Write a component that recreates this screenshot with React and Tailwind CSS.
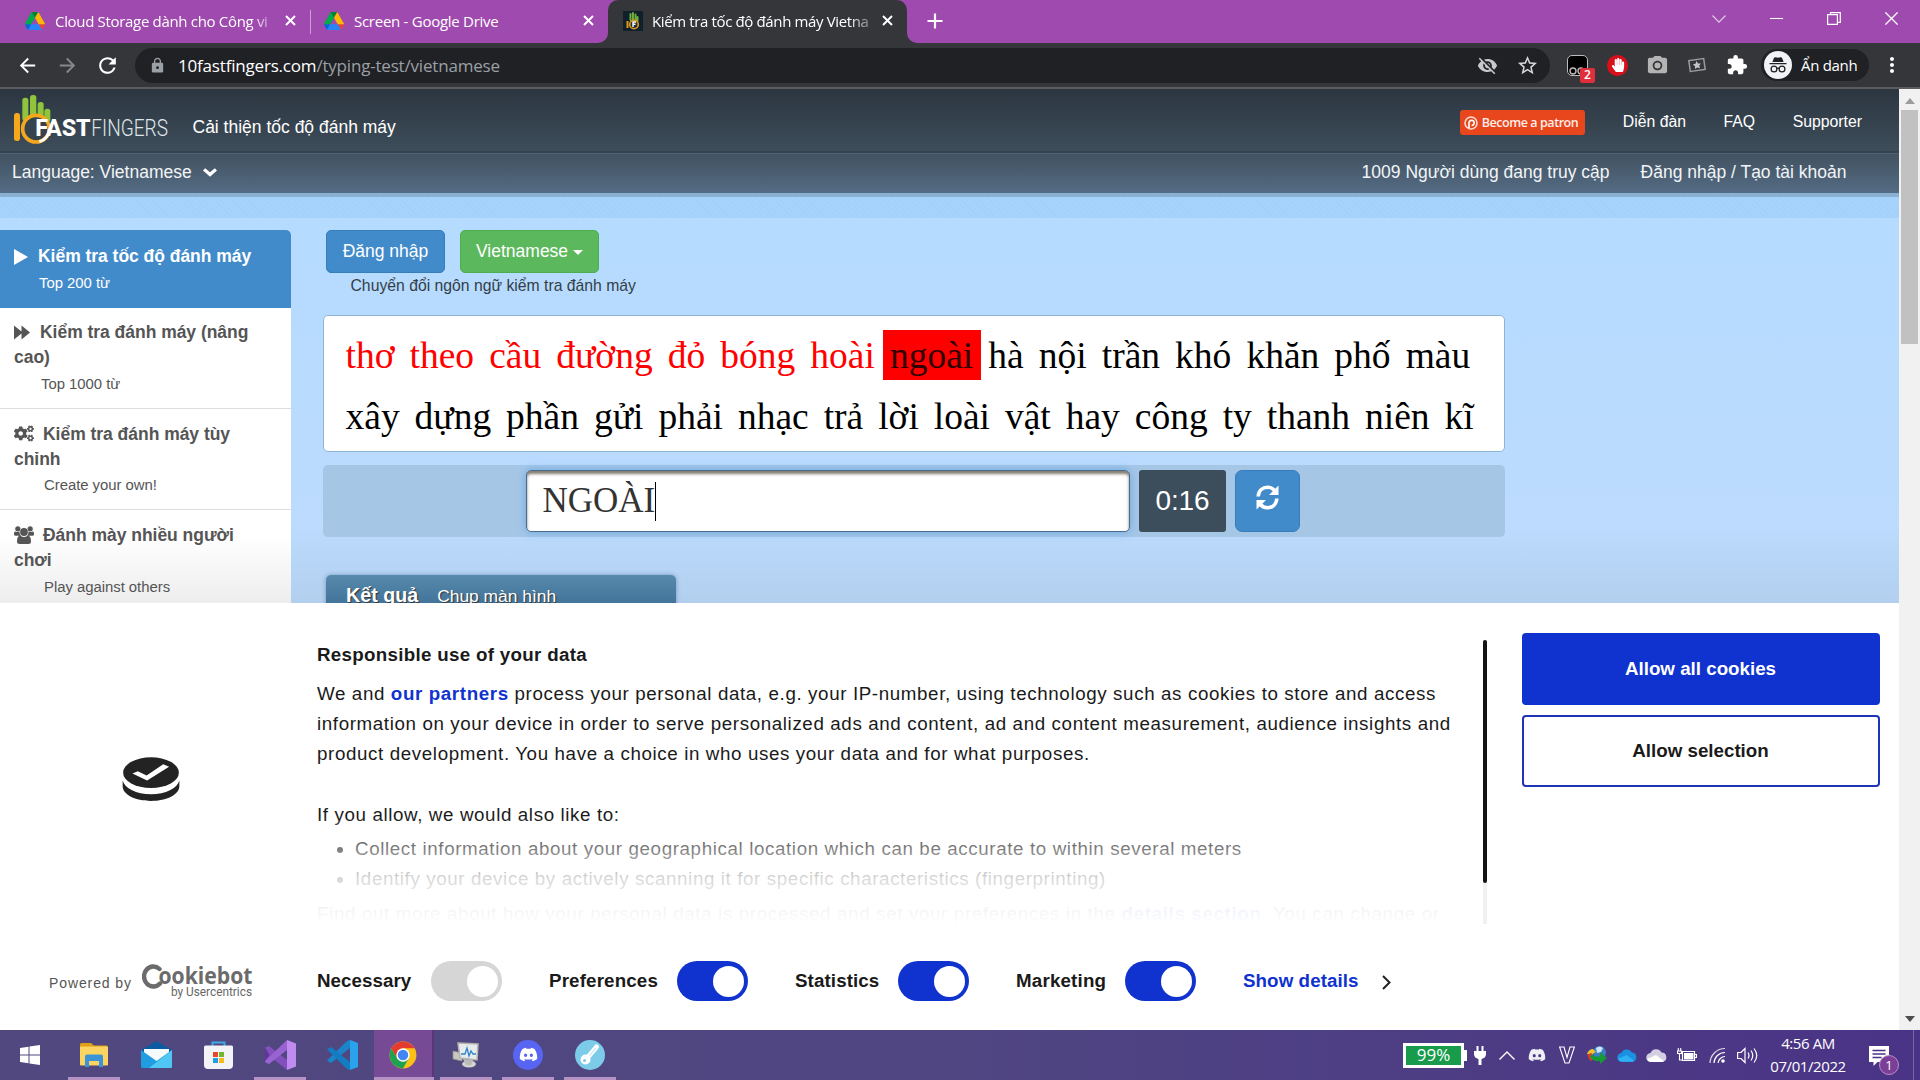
import React from "react";
import {
  MdArrowBack, MdArrowForward, MdRefresh, MdLock, MdStarBorder, MdExtension,
  MdMoreVert, MdVisibilityOff, MdPhotoCamera,
} from "react-icons/md";
import { FaCogs, FaHandPaper, FaDiscord } from "react-icons/fa";

const segoe = "font-['Open_Sans',sans-serif]";

function DriveIcon() {
  return (
    <svg className="h-[18px] w-5 shrink-0" viewBox="0 0 87.3 78">
      <path d="m6.6 66.85 3.85 6.65c.8 1.4 1.95 2.5 3.3 3.3l13.75-23.8h-27.5c0 1.55.4 3.1 1.2 4.5z" fill="#0066da" />
      <path d="m43.65 25-13.75-23.8c-1.35.8-2.5 1.9-3.3 3.3l-25.4 44a9.06 9.06 0 0 0 -1.2 4.5h27.5z" fill="#00ac47" />
      <path d="m73.55 76.8c1.35-.8 2.5-1.9 3.3-3.3l1.6-2.75 7.65-13.25c.8-1.4 1.2-2.95 1.2-4.5h-27.5l5.85 11.5z" fill="#ea4335" />
      <path d="m43.65 25 13.75-23.8c-1.35-.8-2.9-1.2-4.5-1.2h-18.5c-1.6 0-3.15.45-4.5 1.2z" fill="#00832d" />
      <path d="m59.8 53h-32.3l-13.75 23.8c1.35.8 2.9 1.2 4.5 1.2h50.8c1.6 0 3.15-.45 4.5-1.2z" fill="#2684fc" />
      <path d="m73.4 26.5-12.7-22c-.8-1.4-1.95-2.5-3.3-3.3l-13.75 23.8 16.15 28h27.45c0-1.55-.4-3.1-1.2-4.5z" fill="#ffba00" />
    </svg>
  );
}

function Cross() {
  return (
    <svg className="size-[11px] shrink-0" viewBox="0 0 11 11">
      <path d="M1 1l9 9M10 1l-9 9" stroke="#fff" strokeWidth="2" />
    </svg>
  );
}

function FingersIcon() {
  return (
    <svg className="size-5 shrink-0" viewBox="0 0 20 20">
      <rect width="20" height="20" fill="#10202b" />
      <path d="M7.5 9V3M10 9V2M12.5 9V3.5M14.5 10V6" stroke="#6fae3c" strokeWidth="2" strokeLinecap="round" />
      <path d="M4.5 10v7" stroke="#e09a1c" strokeWidth="2" />
      <circle cx="11" cy="13.5" r="4.3" fill="#27333a" stroke="#e09a1c" strokeWidth="1.6" />
      <path d="M10 16v-5h3M10 13.3h2.5" stroke="#fff" strokeWidth="1.4" fill="none" />
    </svg>
  );
}

function TabStrip() {
  return (
    <div className={`flex h-[43px] bg-[#9f4aae] text-[15px] leading-5 tracking-[-0.27px] text-white ${segoe}`}>
      <div className="flex h-[41px] w-[310px] items-center pl-[25px]">
        <DriveIcon />
        <span className="ml-[10px] w-[219px] whitespace-nowrap tracking-[-0.32px] [mask-image:linear-gradient(90deg,#000_196px,transparent_226px)]">
          Cloud Storage dành cho Công vi
        </span>
        <span className="ml-[11px] flex"><Cross /></span>
      </div>
      <div className="mt-[10px] h-6 w-px bg-[#c9a0d1]" />
      <div className="flex h-[41px] w-[297px] items-center pl-[13px]">
        <DriveIcon />
        <span className="ml-[10px] w-[219px] whitespace-nowrap">Screen - Google Drive</span>
        <span className="ml-[10px] flex"><Cross /></span>
      </div>
      <div className="relative flex h-[43px] w-[299px] items-center rounded-t-[10px] bg-[#35363a] pb-[2px] pl-[15px]">
        <svg className="absolute bottom-0 -left-[10px] size-[10px]" viewBox="0 0 10 10"><path d="M10 0V10H0A10 10 0 0 0 10 0z" fill="#35363a" /></svg>
        <svg className="absolute -right-[10px] bottom-0 size-[10px]" viewBox="0 0 10 10"><path d="M0 0V10H10A10 10 0 0 1 0 0z" fill="#35363a" /></svg>
        <FingersIcon />
        <span className="ml-[9px] w-[219px] whitespace-nowrap tracking-[-0.37px] [mask-image:linear-gradient(90deg,#000_196px,transparent_230px)]">
          Kiểm tra tốc độ đánh máy Vietna
        </span>
        <span className="ml-[11px] flex"><Cross /></span>
      </div>
      <svg className="mt-[13px] ml-5 size-4" viewBox="0 0 16 16"><path d="M8 .5v15M.5 8h15" stroke="#fff" strokeWidth="2.2" /></svg>
      <div className="flex-1" />
      <svg className="mt-[15px] mr-[44px] h-[8px] w-[14px]" viewBox="0 0 14 8"><path d="M.5 .5L7 7.2 13.5 .5" stroke="#e4cfe8" fill="none" strokeWidth="1.1" /></svg>
      <svg className="mt-[12px] mr-[44px] h-[13px] w-[13px]" viewBox="0 0 13 13"><path d="M0 6.5h13" stroke="#fff" strokeWidth="1.1" /></svg>
      <svg className="mt-[12px] mr-[44px] h-[13px] w-[14px]" viewBox="0 0 14 13"><path d="M.6 2.6h9.8v9.8H.6zM3.5 2.5V.6h9.8v9.8h-2.6" stroke="#fff" fill="none" strokeWidth="1.2" /></svg>
      <svg className="mt-[12px] mr-[22px] h-[13px] w-[13px]" viewBox="0 0 13 13"><path d="M.4 .4l12.2 12.2M12.6 .4L.4 12.6" stroke="#fff" strokeWidth="1.3" /></svg>
    </div>
  );
}

function Toolbar() {
  return (
    <div className="flex h-[46px] items-center border-b-2 border-[#5b5c5f] bg-[#35363a]">
      <MdArrowBack className="ml-4 size-[23px] text-white" />
      <MdArrowForward className="ml-[17px] size-[23px] text-[#87888b]" />
      <MdRefresh className="ml-[16px] size-[25px] text-white" />
      <div className={`ml-[15px] flex h-[35px] w-[1415px] items-center rounded-full bg-[#202124] ${segoe}`}>
        <MdLock className="ml-[14px] size-[17px] text-[#9aa0a6]" />
        <span className="ml-[12px] flex-1 pt-px text-[17px] tracking-[-0.19px] text-[#9aa0a6]">
          <span className="text-white">10fastfingers.com</span>/typing-test/vietnamese
        </span>
        <MdVisibilityOff className="mr-[18px] size-[21px] text-[#c6c8ca]" />
        <MdStarBorder className="mr-[11px] size-[23px] text-[#d5d7da]" />
      </div>
      <div className="relative ml-[17px] size-[21px] rounded-[5px] border-[1.5px] border-[#bbb] bg-black">
        <svg className="absolute bottom-0 left-0 h-[9px] w-[18px]" viewBox="0 0 18 9"><circle cx="5" cy="5" r="3" fill="none" stroke="#bbb" strokeWidth="1.4" /><circle cx="13" cy="5" r="3" fill="none" stroke="#bbb" strokeWidth="1.4" /></svg>
        <div className="absolute -right-[8px] -bottom-[8px] flex h-[15px] w-[15px] items-center justify-center rounded-[2px] bg-[#e02f3a] text-[12px] leading-none font-semibold text-white font-['Open_Sans',sans-serif]">2</div>
      </div>
      <div className="ml-[19px] flex size-[21px] items-center justify-center rounded-full bg-[#d9101a]"><FaHandPaper className="size-[14px] text-white" /></div>
      <MdPhotoCamera className="ml-[18px] size-[23px] text-[#b4b4b4]" />
      <svg className="ml-[19px] h-[16px] w-[18px]" viewBox="0 0 18 16">
        <g transform="rotate(-8 9 8)"><rect x="1.500" y="2.500" width="15" height="11" fill="none" stroke="#9a9b9d" strokeWidth="1.500" />
          <path d="M9 4l1.300 2.600 2.800.4-2 1.900.5 2.800L9 10.400l-2.600 1.300.5-2.800-2-1.900 2.800-.4z" fill="#c4c4c4" /></g>
      </svg>
      <MdExtension className="ml-[20px] size-[22px] text-white" />
      <div className={`ml-[13px] flex h-[32px] w-[108px] items-center rounded-full bg-[#202124] pl-[3px] text-[15px] tracking-[-0.3px] text-white ${segoe}`}>
        <svg className="size-[28px]" viewBox="0 0 28 28"><circle cx="14" cy="14" r="14" fill="#f1f3f4" /><path d="M9.800 7.200Q10.300 6 11.500 6.200L14 6.800l2.500-.6q1.200-.2 1.700 1L19.600 11H8.400zM5.500 12h17v1.300h-17z" fill="#202124" /><circle cx="10" cy="18" r="2.900" fill="none" stroke="#202124" strokeWidth="1.300" /><circle cx="18" cy="18" r="2.900" fill="none" stroke="#202124" strokeWidth="1.300" /><path d="M12.800 17.500q1.200-.8 2.400 0" fill="none" stroke="#202124" strokeWidth="1.200" /></svg>
        <span className="ml-[9px] whitespace-nowrap">Ẩn danh</span>
      </div>
      <MdMoreVert className="ml-[11px] size-[24px] text-white" />
    </div>
  );
}

function SiteLogo() {
  return (
    <svg className="h-[62px] w-[180px] shrink-0" viewBox="0 0 540 186">
      <g fill="#8fc43c">
        <rect x="67" y="26" width="18" height="70" rx="8" />
        <rect x="90" y="18" width="19" height="70" rx="8" />
        <rect x="113" y="39" width="18" height="50" rx="8" />
        <rect x="133" y="59" width="18" height="40" rx="8" />
      </g>
      <circle cx="108" cy="119" r="40" fill="#35434f" stroke="#f5a81c" strokeWidth="11" />
      <path d="M148 119A40 40 0 0 1 118 158" fill="none" stroke="#fff" strokeWidth="9" />
      <rect x="42" y="72" width="18" height="84" rx="8" fill="#f5a81c" />
      <text x="106" y="141" fontFamily="Roboto" fontWeight="800" fontSize="70" fill="#fff" textLength="166" lengthAdjust="spacingAndGlyphs">FAST</text>
      <text x="274" y="141" fontFamily="Roboto" fontWeight="300" fontSize="70" fill="#dfe6ea" textLength="230" lengthAdjust="spacingAndGlyphs">FINGERS</text>
    </svg>
  );
}

function SiteHeader() {
  return (
    <header className="text-[#f2f5f7]">
      <div className="flex h-[64px] items-start border-b-2 border-[#33434f] bg-linear-to-b from-[#2c3641] to-[#3d4d5a]">
        <SiteLogo />
        <span className="mt-[26px] ml-[12.5px] text-[17.5px] leading-6 whitespace-nowrap text-white">Cải thiện tốc độ đánh máy</span>
        <div className="flex-1" />
        <div className="mt-[21px] flex h-[25px] w-[125px] items-center rounded-[3px] bg-[#e8461c] pl-[4px]">
          <svg className="size-[14px]" viewBox="0 0 14 14"><circle cx="7" cy="7" r="6" fill="none" stroke="#fbd9cf" strokeWidth="1.600" /><path d="M5 12V7.200a2.600 2.600 0 1 1 2.600 2.300" fill="none" stroke="#fff" strokeWidth="1.700" /></svg>
          <span className="ml-[4px] pt-px text-[12.5px] font-semibold tracking-[-0.44px] whitespace-nowrap text-[#fdeee9] font-['Open_Sans',sans-serif]">Become a patron</span>
        </div>
        <nav className="mt-[21px] mr-[37px] ml-[38px] flex gap-[37.5px] text-[15.8px] leading-6 text-white">
          <span>Diễn đàn</span><span>FAQ</span><span>Supporter</span>
        </nav>
      </div>
      <div className="flex h-[40px] items-start border-t border-[#506373] bg-linear-to-b from-[#425260] to-[#546c85] pt-[6px] pl-[12px] text-[17.5px] leading-6">
        <span>Language: Vietnamese</span>
        <svg className="mt-[8px] ml-[11px] h-[9px] w-[14px]" viewBox="0 0 15 9"><path d="M2.300 0L7.500 4.300 12.700 0 15 2.400 7.500 9 0 2.400z" fill="#fff" /></svg>
        <div className="flex-1" />
        <span>1009 Người dùng đang truy cập</span>
        <span className="mr-[52.5px] ml-[31px]">Đăng nhập / Tạo tài khoản</span>
      </div>
      <div className="h-[4px] bg-[#8ab0d4]" />
    </header>
  );
}

function ForwardIcon() {
  return (
    <svg className="inline h-[15px] w-4 align-[-2px]" viewBox="0 0 16 15"><path d="M0 .5l7.500 6V.5l8.500 7-8.500 7v-6l-7.500 6z" fill="currentColor" /></svg>
  );
}

function GroupIcon() {
  return (
    <svg className="inline h-[18px] w-5 align-[-3px]" viewBox="0 0 20 18" fill="currentColor">
      <circle cx="3.800" cy="2.800" r="2.600" /><circle cx="16.200" cy="2.800" r="2.600" /><circle cx="10" cy="6" r="3.900" />
      <path d="M0 9V7.500Q0 5.500 1.500 5.500q2.200 1 4 .1Q5.300 8.300 7 9.800H2Q0 9.800 0 9zM20 9V7.500Q20 5.500 18.500 5.500q-2.200 1-4 .1.200 2.700-1.500 4.200h5q2 0 2-.8zM3 15.500q0-6 3.400-6Q10 12.500 13.600 9.500q3.400 0 3.400 6 0 2.500-2.500 2.500h-9Q3 18 3 15.500z" />
    </svg>
  );
}

const tests = [
  { icon: <ForwardIcon />, gap: "ml-[10px]", title: ["Kiểm tra đánh máy (nâng", "cao)"], sub: "Top 1000 từ", pad: "pl-[27px]" },
  { icon: <FaCogs className="inline h-[17px] w-5 align-[-2px]" />, gap: "ml-[9px]", title: ["Kiểm tra đánh máy tùy", "chỉnh"], sub: "Create your own!", pad: "pl-[30px]" },
  { icon: <GroupIcon />, gap: "ml-[9px]", title: ["Đánh mày nhiều người", "chơi"], sub: "Play against others", pad: "pl-[30px]" },
];

function Sidebar() {
  return (
    <aside className="h-[373px] w-[291px] shrink-0 overflow-hidden rounded-tr-[5px] bg-linear-to-b from-white from-82% to-[#ededee] text-[#555] tracking-[-0.03px]">
      <div className="h-[78px] bg-[#428bca] pt-[14px] pl-[14px] text-white">
        <div className="flex items-center text-[17.5px] leading-[25px] font-bold whitespace-nowrap">
          <svg className="h-[16px] w-[14px]" viewBox="0 0 14 16"><path d="M0 0l14 8-14 8z" fill="#fff" /></svg>
          <span className="ml-[10px]">Kiểm tra tốc độ đánh máy</span>
        </div>
        <div className="pl-[25px] text-[14.9px] leading-[28px]">Top 200 từ</div>
      </div>
      {tests.map((t, i) => (
        <div key={t.sub} className={`h-[101px] border-b border-[#ddd] pl-[14px] ${i === 0 ? "pt-[12px]" : "pt-[13px]"}`}>
          <div className="text-[17.5px] leading-[25px] font-bold whitespace-nowrap">
            {t.icon}<span className={t.gap}>{t.title[0]}</span><br />{t.title[1]}
          </div>
          <div className={`text-[14.9px] ${i === 1 ? "leading-[26px]" : "leading-[28px]"} ${t.pad}`}>{t.sub}</div>
        </div>
      ))}
    </aside>
  );
}

const row1 = ["thơ", "theo", "cầu", "đường", "đỏ", "bóng", "hoài", "ngoài", "hà", "nội", "trần", "khó", "khăn", "phố", "màu"];
const row2 = ["xây", "dựng", "phần", "gửi", "phải", "nhạc", "trả", "lời", "loài", "vật", "hay", "công", "ty", "thanh", "niên", "kĩ"];

function wordStyle(i) {
  if (i < 7) return "text-[#f00]";
  if (i === 7) return "-mx-[7.300px] mt-[5px] mb-[6px] bg-[#f00] px-[7.300px] pt-px leading-[49px] text-[#300]";
  return "";
}

function TypingTest() {
  return (
    <main className="ml-[32px] w-[1182px]">
      <div className="flex pl-[3px] text-[17.5px] text-white">
        <div className="flex h-[43px] w-[119px] items-center justify-center rounded-[5px] border border-[#357ebd] bg-[#428bca] pb-px">Đăng nhập</div>
        <div className="ml-[15px] flex h-[43px] w-[139px] items-center rounded-[5px] border border-[#4cae4c] bg-[#5cb85c] pb-px pl-[15px]">
          Vietnamese<span className="mt-[2px] ml-[5px] border-x-[5px] border-t-[5px] border-x-transparent border-t-white" />
        </div>
      </div>
      <div className="mt-[3px] pl-[27.5px] text-[15.75px] leading-5 text-[#333e48]">Chuyển đổi ngôn ngữ kiểm tra đánh máy</div>
      <div className="mt-[19px] h-[137px] rounded-[5px] border border-[#8fb5d6] bg-white pt-[9px] pl-[21.5px] text-[37.5px] leading-[61px] text-black font-['Liberation_Serif',serif]">
        <div className="flex gap-[15.050px]">{row1.map((w, i) => <span key={w} className={wordStyle(i)}>{w}</span>)}</div>
        <div className="flex gap-[14.950px]">{row2.map((w) => <span key={w}>{w}</span>)}</div>
      </div>
      <div className="mt-[13px] flex h-[72px] rounded-[5px] bg-[#a6c6e6] pt-[5px] pl-[203px]">
        <div className="flex h-[62px] w-[604px] items-center rounded-[5px] border border-[#4b6b8a] bg-white pl-[15.5px] text-[35px] text-[#333] shadow-[inset_0_3px_3px_rgba(50,35,20,0.6),0_0_9px_rgba(90,160,225,0.8)] font-['Liberation_Serif',serif]">
          NGOÀI<span className="h-[39px] w-px bg-black" />
        </div>
        <div className="ml-[9px] flex h-[62px] w-[87px] items-center justify-center rounded-[3px] bg-[#3c4d5c] text-[28px] tracking-[-0.1px] text-white">0:16</div>
        <div className="ml-[9px] flex h-[62px] w-[65px] items-center justify-center rounded-[7px] border border-[#357ebd] bg-[#428bca] pb-[7px]">
          <svg className="h-[25px] w-[23px]" viewBox="0 0 23 25">
            <path d="M2.200 11.500C2.600 5.500 6.800 2.300 11.500 2.300c3 0 5.300 1.200 7 3.200M20.800 13.500c-.4 6-4.600 9.200-9.300 9.200-3 0-5.300-1.200-7-3.200" fill="none" stroke="#fff" strokeWidth="3.600" />
            <path d="M22.500.5V10h-9.500zM.5 24.500V15h9.500z" fill="#fff" />
          </svg>
        </div>
      </div>
      <div className="mt-[38px] ml-[3px] flex h-[50px] w-[350px] items-baseline rounded-t-[5px] bg-linear-to-b from-[#578aac] to-[#34628c] pt-[5px] pl-[20px] whitespace-nowrap text-white shadow-[0_0_4px_rgba(60,90,130,0.5)] [text-shadow:1px_1px_1px_#333]">
        <span className="text-[19.700px] leading-[30px] font-bold">Kết quả</span>
        <span className="ml-[19px] text-[17.400px]">Chụp màn hình</span>
      </div>
    </main>
  );
}

function Toggle({ label, on, className }) {
  return (
    <div className={`flex items-center ${className}`}>
      <span className="flex-1">{label}</span>
      <span className={`flex h-[40px] w-[71px] items-center justify-end rounded-full pr-[4px] ${on ? "bg-[#1032cf]" : "bg-[#d6d6d6]"}`}>
        <span className="size-[31px] rounded-full bg-white" />
      </span>
    </div>
  );
}

function CookieBanner() {
  return (
    <section className="flex h-[427px] shrink-0 bg-white text-[18.75px] text-[#1a1a1a]">
      <div className="flex w-[317px] flex-col">
        <svg className="mt-[154px] ml-[122px] h-[44px] w-[58px]" viewBox="0 0 58 45">
          <path d="M0 24v6c0 8.500 13 15 29 15s29-6.500 29-15v-6c-2 8-14 14-29 14S2 32 0 24z" fill="#232323" />
          <ellipse cx="29" cy="16" rx="28.500" ry="15.700" fill="#232323" />
          <path d="M10 17l5.500-2.500 9 4.500 17-11.500 6 2.500-22.500 14z" fill="#fff" />
        </svg>
        <div className="mt-[161px] ml-[49px] flex">
          <span className="mt-[11px] text-[14px] tracking-[0.900px] whitespace-nowrap text-[#555]">Powered by</span>
          <svg className="ml-[10px] h-[38px] w-[112px]" viewBox="0 0 112 38">
            <path d="M17.500 7A9.300 10 0 1 0 18 21.500" fill="none" stroke="#6b6b6b" strokeWidth="4.400" strokeLinecap="round" />
            <text x="16.500" y="22" fontFamily="Open Sans" fontWeight="700" fontSize="24" fill="#6b6b6b" textLength="94" lengthAdjust="spacingAndGlyphs">ookiebot</text>
            <text x="29" y="33.500" fontFamily="Roboto" fontSize="12" fill="#666" textLength="81" lengthAdjust="spacingAndGlyphs">by Usercentrics</text>
          </svg>
        </div>
      </div>
      <div className="w-[1166px]">
        <div className="relative mt-[37px] h-[284px] overflow-hidden tracking-[0.620px] whitespace-nowrap">
          <h2 className="mt-[3px] leading-6 font-bold tracking-[0.300px]">Responsible use of your data</h2>
          <p className="mt-[12px] leading-[30.200px]">
            We and <b className="tracking-[0.620px] text-[#1032cf]">our partners</b> process your personal data, e.g. your IP-number, using technology such as cookies to store and access<br />
            information on your device in order to serve personalized ads and content, ad and content measurement, audience insights and<br />
            product development. You have a choice in who uses your data and for what purposes.<br /><br />
            If you allow, we would also like to:
          </p>
          <ul className="mt-[4px] list-disc pl-[38px] leading-[30.200px]">
            <li>Collect information about your geographical location which can be accurate to within several meters</li>
            <li>Identify your device by actively scanning it for specific characteristics (fingerprinting)</li>
          </ul>
          <p className="mt-[5px] leading-[30.200px] tracking-[0.650px]">
            Find out more about how your personal data is processed and set your preferences in the <b className="text-[#1032cf]">details section</b>. You can change or
          </p>
          <div className="absolute inset-x-0 bottom-0 h-[108px] bg-linear-to-b from-white/0 via-white/83 via-58% to-white" />
        </div>
        <div className="mt-[37px] flex h-[40px] items-center font-bold">
          <Toggle label="Necessary" className="w-[185px] tracking-[0.050px]" />
          <Toggle label="Preferences" on className="ml-[47px] w-[199px] tracking-[0.150px]" />
          <Toggle label="Statistics" on className="ml-[47px] w-[174px] tracking-[0.100px]" />
          <Toggle label="Marketing" on className="ml-[47px] w-[180px] tracking-[0.180px]" />
          <span className="mt-px ml-[47px] w-[116px] tracking-[0.080px] whitespace-nowrap text-[#1032cf]">Show details</span>
          <svg className="mt-[2px] ml-[23px] h-[15px] w-[9px]" viewBox="0 0 9 15"><path d="M1 1l6.500 6.500L1 14" fill="none" stroke="#222" strokeWidth="2" /></svg>
        </div>
      </div>
      <div className="mt-[37px] h-[284px] w-[4px] bg-[#f1f1f1]"><div className="h-[243px] rounded-full bg-[#141414]" /></div>
      <div className="mt-[30px] ml-[35px] w-[358px] font-bold">
        <div className="flex h-[72px] items-center justify-center rounded-[4px] bg-[#1032cf] pr-px text-white">Allow all cookies</div>
        <div className="mt-[10px] flex h-[72px] items-center justify-center rounded-[4px] border-2 border-[#1f35b5] pr-px">Allow selection</div>
      </div>
    </section>
  );
}

const apps = [
  { id: "start", art: <svg className="mr-[4px] size-5" viewBox="0 0 20 20"><path d="M0 3l8.500-1.200v7.700H0zM9.500 1.600L20 0v9.500H9.500zM0 10.500h8.500v7.700L0 17zM9.500 10.500H20V20L9.500 18.400z" fill="#fff" /></svg> },
  { id: "explorer", run: true, art: <svg className="h-6 w-[28px]" viewBox="0 0 28 24"><path d="M0 1.500Q0 0 1.500 0H11l3 2.500h12.500Q28 2.500 28 4v18H0z" fill="#e0a016" /><rect y="3.500" width="28" height="19" rx="1" fill="#fcd462" /><path d="M5 13.500q0-2 2-2h14q2 0 2 2V24h-4v-6H9v6H5z" fill="#3a94d6" /></svg> },
  { id: "mail", art: <svg className="h-[27px] w-[31px]" viewBox="0 0 31 27"><path d="M0 9L15.500 0 31 9v17H0z" fill="#0c5ba0" /><path d="M3 8h25v12H3z" fill="#f5fafd" /><path d="M0 9l15.500 11L31 9v16.500q0 1.500-1.500 1.500h-28Q0 27 0 25.500z" fill="#1f9de0" /><path d="M31 9L8 27h21.500q1.500 0 1.500-1.500z" fill="#4fc6f4" /></svg> },
  { id: "store", art: <svg className="h-7 w-[29px]" viewBox="0 0 29 28"><path d="M8.500 7V1.500h12V7" fill="none" stroke="#3fa9e8" strokeWidth="2" /><path d="M0 6q0-1.500 1.500-1.500h26Q29 4.500 29 6v18q0 4-4 4H4q-4 0-4-4z" fill="#f2f3f6" /><path d="M9 11h5v5H9z" fill="#e8472c" /><path d="M15 11h5v5h-5z" fill="#74b52b" /><path d="M9 17h5v5H9z" fill="#1d9fe6" /><path d="M15 17h5v5h-5z" fill="#f7b81b" /></svg> },
  { id: "visualstudio", run: true, art: <svg className="h-[30px] w-[31px]" viewBox="0 0 31 30"><path d="M0 7.500L4 6l18 14v10L9 19.500 4 24l-4-2z" fill="#8450bd" /><path d="M0 7.500L4.500 15 0 22z" fill="#5f3796" /><path d="M22 0v10L4 24l-4-2 0-1z" fill="#9a63d2" /><path d="M22 0l9 3.500v23L22 30z" fill="#c08bef" /></svg> },
  { id: "vscode", art: <svg className="h-[30px] w-[31px]" viewBox="0 0 31 30"><path d="M23 0v8L4 23 0 20.500 20 1z" fill="#1c84c9" /><path d="M23 30v-8L4 7 0 9.500 20 29z" fill="#147cc0" /><path d="M23 0l8 3v24l-8 3z" fill="#2aa3ec" /></svg> },
  { id: "chrome", active: true, art: <svg className="h-[28px] w-[28px]" viewBox="0 0 48 48"><circle cx="24" cy="24" r="23" fill="#fbc116" /><path d="M4.100 12.500A23 23 0 0 0 24 47l10-17.300-10 5.800-10-5.800z" fill="#1fa152" /><path d="M24 12.500h19.900A23 23 0 0 0 4.100 12.500l9.900 17z" fill="#e33b2e" /><circle cx="24" cy="24" r="11.500" fill="#fff" /><circle cx="24" cy="24" r="9" fill="#4285f4" /></svg> },
  { id: "taskmgr", run: true, art: <svg className="h-[26px] w-[28px]" viewBox="0 0 28 26"><path d="M1 9l9 2v8l-9-2z" fill="#c9c9c4" stroke="#8f8f8a" strokeWidth=".8" /><path d="M6 1l20 1-1 16-17-2z" fill="#e6ebee" stroke="#b5b5ad" strokeWidth="1.500" /><path d="M9 12l4 0 2-6 2 8 2-5 2 3h3" fill="none" stroke="#2f82c8" strokeWidth="1.300" /><ellipse cx="17" cy="22" rx="7" ry="3.500" fill="#d4d4cd" /><path d="M11 17l10 1-2 5h-5z" fill="#bbb" /></svg> },
  { id: "discord", run: true, art: <span className="flex size-[30px] items-center justify-center rounded-full bg-[#5865f2]"><FaDiscord className="size-[19px] text-white" /></span> },
  { id: "key", run: true, art: <svg className="size-[30px]" viewBox="0 0 30 30"><circle cx="15" cy="15" r="15" fill="#7ccbe8" /><circle cx="10.500" cy="19.500" r="5" fill="#fff" /><circle cx="9.500" cy="20.500" r="1.500" fill="#7ccbe8" /><path d="M13 17L21.500 7" stroke="#fff" strokeWidth="5" strokeLinecap="round" /><path d="M14.500 15.500L21 8" stroke="#a9def1" strokeWidth="1" /></svg> },
];

function Taskbar() {
  return (
    <footer className="flex h-[50px] bg-linear-to-r from-[#51487f] via-[#504682] via-50% to-[#4a3386] pl-px text-white">
      {apps.map((a) => (
        <div key={a.id} className={`flex h-[50px] w-[62px] flex-col items-center ${a.active ? "px-px" : "px-[5px]"}`}>
          <div className={`flex h-[47px] w-full items-center justify-center pt-[2px] ${a.active ? "border-r-2 border-[#5b3578] bg-[#774a96]" : ""}`}>{a.art}</div>
          {(a.run || a.active) && <div className="h-[3px] w-full bg-[#b592c4]" />}
        </div>
      ))}
      <div className={`flex h-[50px] flex-1 items-center pl-[782px] ${segoe}`}>
        <div className="flex h-[25px] w-[61px] shrink-0 items-center justify-center border-[3px] border-white bg-[#189c4c] pb-px text-[17px] leading-none">99%</div>
        <div className="h-[11px] w-[3px] shrink-0 bg-white" />
        <svg className="ml-[7px] h-[19px] w-[12px] shrink-0" viewBox="0 0 12 19"><path d="M2.500 0h2v5h3V0h2v5H12v3q0 4-4.500 5v6h-3v-6Q0 12 0 8V5h2.500z" fill="#fff" /></svg>
        <svg className="ml-[13px] h-[9px] w-[16px] shrink-0" viewBox="0 0 16 9"><path d="M.5 8.500L8 1l7.500 7.500" stroke="#fff" strokeWidth="1.400" fill="none" /></svg>
        <FaDiscord className="ml-[13px] size-[18px] shrink-0 text-[#f1eff6]" />
        <svg className="ml-[13px] h-[18px] w-[16px] shrink-0" viewBox="0 0 16 18"><path d="M.6 1H5l3 10.500L11 1h4.400L10 17H6z" fill="none" stroke="#fff" strokeWidth="1.100" /></svg>
        <svg className="ml-[12px] size-[20px] shrink-0" viewBox="0 0 20 20"><circle cx="12.500" cy="7.500" r="6.500" fill="#3b7fc4" /><path d="M9 3q4-3 7 0l-2 4-4 1z" fill="#c9e6f7" /><path d="M0 9q2-5 6-5l3 3q-4 1-4 5z" fill="#eec52c" /><path d="M1 9q-1 4 3 7l3-3q-3-2-2-5z" fill="#d83a2a" /><path d="M5 9q2 4 8 2V7l7 6-7 6v-3Q6 17 3 12z" fill="#159a35" /></svg>
        <svg className="ml-[10px] h-[14px] w-[20px] shrink-0" viewBox="0 0 21 14"><path d="M5 14a4.500 4.500 0 0 1-.5-9A6 6 0 0 1 15.500 4.500 4.800 4.800 0 0 1 16.500 14z" fill="#1b8fe0" /><path d="M1 11l9-4 8 6q-.7.900-2 1H5q-3 0-4-3z" fill="#2fb0f4" /></svg>
        <svg className="ml-[9px] h-[14px] w-[21px] shrink-0" viewBox="0 0 21 14"><path d="M5 14a4.500 4.500 0 0 1-.5-9A6 6 0 0 1 15.500 4.500 4.800 4.800 0 0 1 16.500 14z" fill="#d4cfe2" /><path d="M1 11l9-4 8 6q-.7.900-2 1H5q-3 0-4-3z" fill="#fff" /></svg>
        <svg className="ml-[10px] h-[15px] w-[20px] shrink-0" viewBox="0 0 20 15"><path d="M5.500 3.500h12v9h-12zM17.500 6.500h2v3h-2" fill="none" stroke="#fff" strokeWidth="1.200" /><path d="M7 5h9.500v6.500H7z" fill="#fff" /><path d="M1.300 0v2.500M3.700 0v2.500M.5 3h4v2.500h-4zM2.500 5.500V12H5" fill="none" stroke="#fff" strokeWidth="1.100" /></svg>
        <svg className="ml-[12px] size-[17px] shrink-0" viewBox="0 0 17 17"><g fill="none" stroke="#fff" strokeWidth="1.200"><path d="M1 16A15 15 0 0 1 16 1.500" opacity=".8" /><path d="M5 16A11 11 0 0 1 16 5.500" /><path d="M9 16a7.300 7.300 0 0 1 7-6.500" /></g><circle cx="14" cy="14" r="1.800" fill="#fff" /></svg>
        <svg className="ml-[11px] h-[17px] w-[21px] shrink-0" viewBox="0 0 21 17"><g fill="none" stroke="#fff" strokeWidth="1.200"><path d="M.6 5.500H4l4-4v14l-4-4H.6zM11 5.500q2 3 0 6M14 3.500q3.500 5 0 10M17 1.500q5.500 7 0 14" /></g></svg>
        <div className="ml-[11px] w-[78px] shrink-0 text-center text-[15px] leading-[23px] tracking-[-0.420px] whitespace-nowrap">4:56 AM<br />07/01/2022</div>
        <div className="relative mt-[2px] ml-[22px] size-[20px] shrink-0">
          <svg className="h-[20px] w-[20px]" viewBox="0 0 20 20"><path d="M0 0h20v16H8.500L4.500 20v-4H0z" fill="#fff" /><path d="M3.500 4.500h13M3.500 8h13M3.500 11.500h9" stroke="#4a3386" strokeWidth="1.300" /></svg>
          <span className="absolute top-[9px] left-[10px] flex size-[20px] items-center justify-center rounded-full border border-[#b98fca] bg-[#7b3f98] text-[13px] leading-none">1</span>
        </div>
        <div className="ml-[24px] h-full w-px bg-[#776a9f]" />
      </div>
    </footer>
  );
}

export default function App() {
  return (
    <div className="h-[1080px] w-[1920px] overflow-hidden font-['Liberation_Sans',sans-serif]">
      <TabStrip />
      <Toolbar />
      <div className="flex h-[941px]">
        <div className="flex w-[1899px] flex-col overflow-hidden">
          <div className="h-[514px] overflow-hidden bg-linear-to-b from-[#b5dbfe] from-30% via-[#bcdbfe] via-85% to-[#b2cfee]">
            <SiteHeader />
            <div className="h-[21px] bg-[#a6d3fb] bg-[repeating-linear-gradient(45deg,rgba(90,150,210,0.05)_0_1px,transparent_1px_4px)]" />
            <div className="h-[12px]" />
            <div className="flex"><Sidebar /><TypingTest /></div>
          </div>
          <CookieBanner />
        </div>
        <div className="flex w-[21px] flex-col items-center bg-[#f1f1f1]">
          <svg className="mt-[9px] h-[6px] w-[10px]" viewBox="0 0 10 6"><path d="M5 0l5 6H0z" fill="#9c9c9c" /></svg>
          <div className="mt-[6px] h-[234px] w-[17px] bg-[#c1c1c1]" />
          <div className="flex-1" />
          <svg className="mb-[8px] h-[6px] w-[10px]" viewBox="0 0 10 6"><path d="M5 6l5-6H0z" fill="#4d4d4d" /></svg>
        </div>
      </div>
      <Taskbar />
    </div>
  );
}
